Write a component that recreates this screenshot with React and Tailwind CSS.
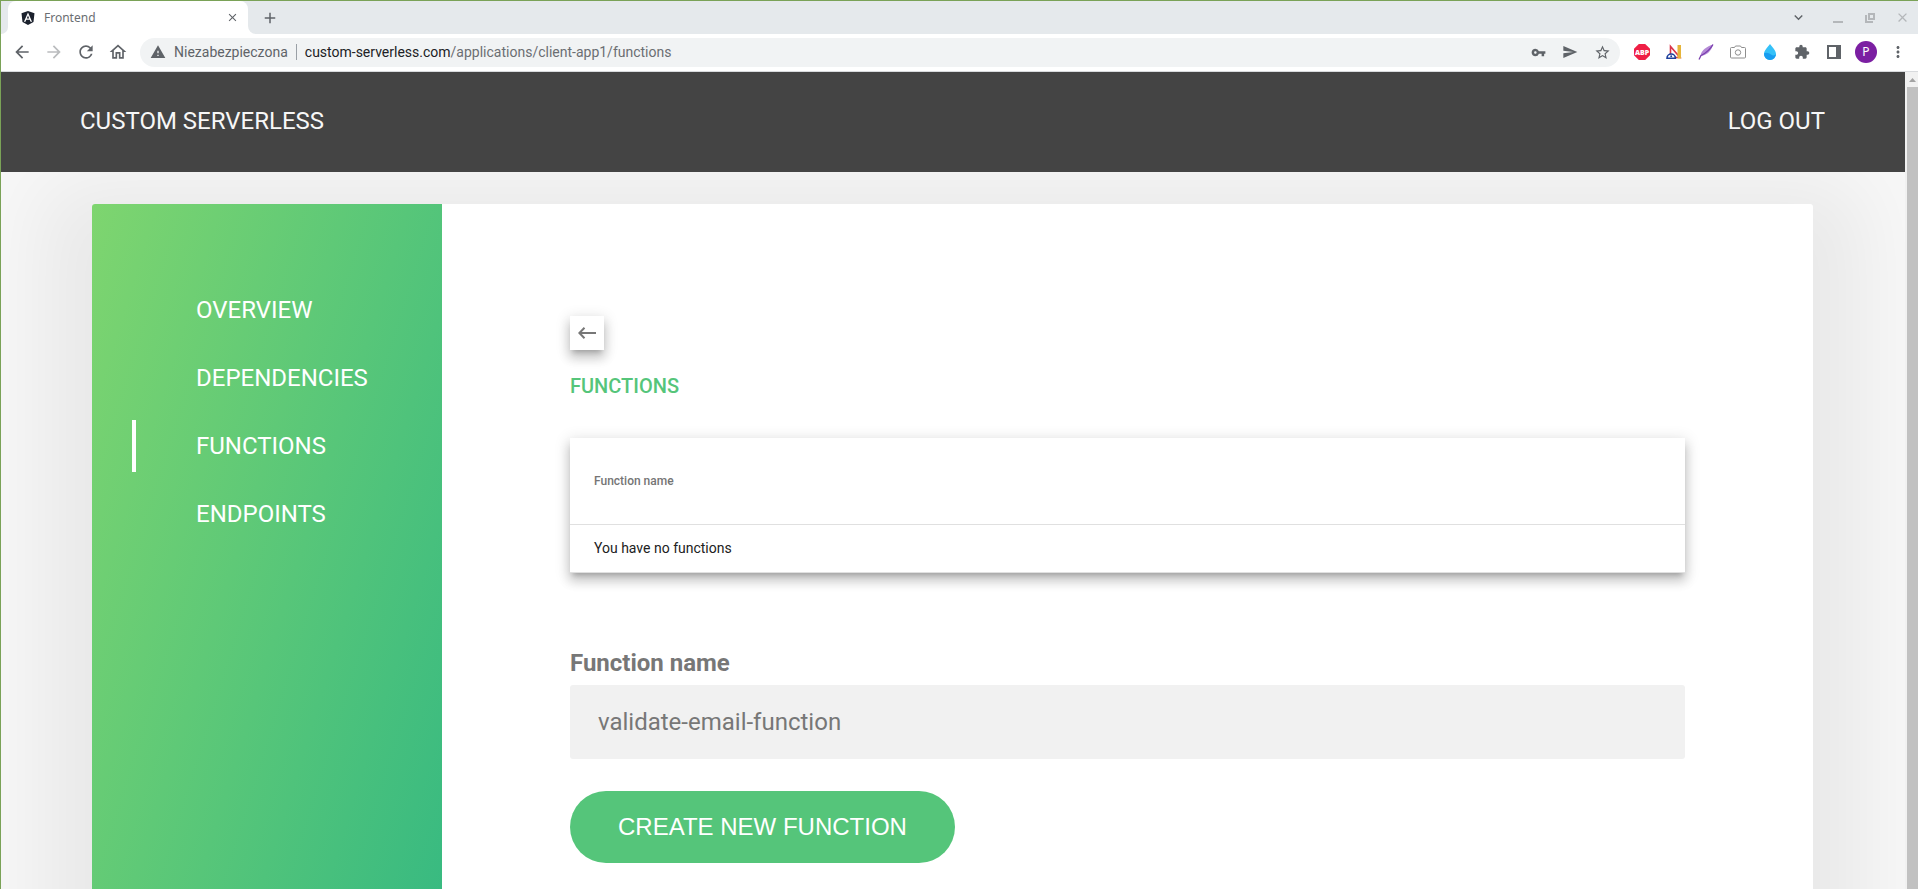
import { FaAngular } from "react-icons/fa";
import {
  MdAdd,
  MdArrowBack,
  MdArrowForward,
  MdClose,
  MdExtension,
  MdKeyboardArrowDown,
  MdMoreVert,
  MdOutlineHome,
  MdRefresh,
  MdSend,
  MdStarOutline,
  MdVpnKey,
  MdWarning,
} from "react-icons/md";

function IconButton({ label, className = "text-[#5f6368]", children }) {
  return (
    <button
      type="button"
      aria-label={label}
      className={"flex h-7 w-8 shrink-0 items-center justify-center " + className}
    >
      {children}
    </button>
  );
}

function AdBlockIcon() {
  return (
    <span className="flex size-4 items-center justify-center bg-[#ef1f45] font-['Open_Sans',sans-serif] text-[7px] leading-none font-extrabold text-white [clip-path:polygon(30%_0,70%_0,100%_30%,100%_70%,70%_100%,30%_100%,0_70%,0_30%)]">
      ABP
    </span>
  );
}

function RulerIcon() {
  return (
    <svg width="16" height="16" viewBox="0 0 16 16" fill="none" aria-hidden="true">
      <path d="M4.5 2.5v11H14z" stroke="#d9344a" strokeWidth="1.6" />
      <path d="M11.5 1H15v13.500h-3.500z" fill="#e6b53a" />
      <path d="M1 14.200a4.200 4.200 0 0 1 8.400 0z" fill="#fff" stroke="#1d3f9c" strokeWidth="1.600" />
      <circle cx="5.200" cy="12.300" r="1" fill="#1d3f9c" />
    </svg>
  );
}

function FeatherIcon() {
  return (
    <svg width="16" height="16" viewBox="0 0 16 16" aria-hidden="true">
      <path d="M15 .5C9 2.5 3 6 2.5 12 8 11.5 13 8 15 .5z" fill="#b48ad6" />
      <path d="M15 .5C12.5 5 8 9 3 11.5L1 15.5" fill="none" stroke="#7a3fae" strokeWidth="1.3" />
    </svg>
  );
}

function CameraIcon() {
  return (
    <svg width="16" height="14" viewBox="0 0 16 14" fill="none" stroke="#8e8e8e" aria-hidden="true">
      <path d="M1.5 2.5h3L5.500 1h5l1 1.500h3a1 1 0 0 1 1 1V12a1 1 0 0 1-1 1h-13a1 1 0 0 1-1-1V3.500a1 1 0 0 1 1-1z" />
      <circle cx="8" cy="7.5" r="2.700" />
    </svg>
  );
}

function DropIcon() {
  return (
    <svg width="14" height="16" viewBox="0 0 14 16" aria-hidden="true">
      <path d="M7 0c2.500 3.500 6 6.500 6 10a6 6 0 0 1-12 0C1 6.500 4.500 3.500 7 0z" fill="#35c1f8" />
      <path d="M1 9.500C3 8 6 9 8 10.500s4 1 5-.5a6 6 0 0 1-12 0z" fill="#189df0" />
    </svg>
  );
}

function SidePanelIcon() {
  return (
    <svg width="14" height="14" viewBox="0 0 14 14" aria-hidden="true">
      <path fillRule="evenodd" fill="#5f6368" d="M0 0h14v14H0zM2 2v10h7V2z" />
    </svg>
  );
}

function RestoreIcon() {
  return (
    <svg width="10" height="10" viewBox="0 0 10 10" fill="none" stroke="currentColor" strokeWidth="2" aria-hidden="true">
      <path d="M4 1h5v5H4z" />
      <path d="M1 2v7h7" />
    </svg>
  );
}

function TabStrip() {
  return (
    <div className="flex h-[33px] shrink-0 items-stretch bg-[#e5e9ec]">
      <div className="h-full w-[7px] bg-white">
        <div className="h-full w-full rounded-br-lg bg-[#e5e9ec]" />
      </div>
      <div className="flex w-[240px] items-center rounded-t-lg bg-white pr-2 pl-3">
        <FaAngular className="size-4 text-[#1b212d]" />
        <span className="ml-2 flex-1 text-xs text-[#6b6e72]">Frontend</span>
        <button type="button" aria-label="Close tab" className="flex size-4 items-center justify-center text-[#5f6368]">
          <MdClose className="size-[13px]" />
        </button>
      </div>
      <div className="h-full w-2 bg-white">
        <div className="h-full w-full rounded-bl-lg bg-[#e5e9ec]" />
      </div>
      <div className="flex flex-1 items-center">
        <button type="button" aria-label="New tab" className="flex h-7 w-7 items-center justify-center text-[#5f6368]">
          <MdAdd className="size-[18px]" />
        </button>
        <div className="ml-auto flex items-center">
          <IconButton label="Search tabs" className="mr-2 text-[#5f6368]">
            <MdKeyboardArrowDown className="size-[17px]" />
          </IconButton>
          <IconButton label="Minimize" className="text-[#b4b7ba]">
            <span className="mt-2 h-[2px] w-[10px] bg-current" />
          </IconButton>
          <IconButton label="Restore" className="text-[#b4b7ba]">
            <RestoreIcon />
          </IconButton>
          <IconButton label="Close window" className="text-[#b4b7ba]">
            <MdClose className="size-[15px]" />
          </IconButton>
        </div>
      </div>
    </div>
  );
}

function Toolbar() {
  return (
    <div className="flex h-[38px] shrink-0 items-center border-b border-[#d8dadd] bg-white pr-1 pb-px pl-[5px]">
      <IconButton label="Back"><MdArrowBack className="size-5" /></IconButton>
      <IconButton label="Forward" className="text-[#babcbe]"><MdArrowForward className="size-5" /></IconButton>
      <IconButton label="Reload"><MdRefresh className="size-5" /></IconButton>
      <IconButton label="Home"><MdOutlineHome className="size-5" /></IconButton>
      <div className="mx-[6px] flex h-[29px] flex-1 items-center rounded-full bg-[#f1f3f4] pr-[2px] pl-[10px] font-[Roboto,sans-serif] text-sm">
        <MdWarning className="size-4 text-[#5f6368]" />
        <span className="ml-2 text-[#5f6368]">Niezabezpieczona</span>
        <span className="mx-2 h-4 w-px bg-[#9aa0a6]" />
        <span className="flex-1 text-[#6b6e72]">
          <span className="text-[#202124]">custom-serverless.com</span>/applications/client-app1/functions
        </span>
        <IconButton label="Passwords"><MdVpnKey className="size-[15px]" /></IconButton>
        <IconButton label="Share"><MdSend className="size-4" /></IconButton>
        <IconButton label="Bookmark"><MdStarOutline className="size-[17px]" /></IconButton>
      </div>
      <IconButton label="Ad blocker"><AdBlockIcon /></IconButton>
      <IconButton label="Page ruler"><RulerIcon /></IconButton>
      <IconButton label="Feather"><FeatherIcon /></IconButton>
      <IconButton label="Screenshot"><CameraIcon /></IconButton>
      <IconButton label="Colour picker"><DropIcon /></IconButton>
      <IconButton label="Extensions"><MdExtension className="size-4" /></IconButton>
      <IconButton label="Side panel"><SidePanelIcon /></IconButton>
      <IconButton label="Profile">
        <span className="flex size-[22px] shrink-0 items-center justify-center rounded-full bg-[#7b1fa2] text-xs text-white">P</span>
      </IconButton>
      <IconButton label="Menu"><MdMoreVert className="size-[18px]" /></IconButton>
    </div>
  );
}

const NAV_ITEMS = ["OVERVIEW", "DEPENDENCIES", "FUNCTIONS", "ENDPOINTS"];

function Sidebar({ active }) {
  return (
    <nav className="w-[350px] shrink-0 rounded-l-[3px] bg-[linear-gradient(to_right_bottom,#7ed56f,#28b485)] pt-20 pl-10">
      <ul className="flex flex-col gap-4">
        {NAV_ITEMS.map((item) => (
          <li key={item}>
            <a
              href="#"
              className={
                "flex h-[52px] items-center border-l-4 pl-[60px] text-2xl text-white " +
                (item === active ? "border-white" : "border-transparent")
              }
            >
              {item}
            </a>
          </li>
        ))}
      </ul>
    </nav>
  );
}

function FunctionsPanel() {
  return (
    <main className="flex-1 px-32 pt-28 pb-32">
      <button
        type="button"
        aria-label="Go back"
        className="flex size-[34px] items-center justify-center bg-white text-[#777] shadow-[0_5px_5px_-3px_rgba(0,0,0,0.2),0_8px_10px_1px_rgba(0,0,0,0.14),0_3px_14px_2px_rgba(0,0,0,0.12)]"
      >
        <svg width="18" height="12" viewBox="0 0 18 12" fill="none" stroke="currentColor" strokeWidth="2" aria-hidden="true">
          <path d="M18 6H1.500M6.500 .8L1.400 6l5.100 5.200" />
        </svg>
      </button>
      <h3 className="mt-5 text-xl leading-8 font-medium text-[#55c57a]">FUNCTIONS</h3>
      <table className="mt-9 w-full border-collapse bg-white text-left shadow-[0_5px_5px_-3px_rgba(0,0,0,0.2),0_8px_10px_1px_rgba(0,0,0,0.14),0_3px_14px_2px_rgba(0,0,0,0.12)]">
        <thead>
          <tr className="h-[86px] border-b border-[#e0e0e0]">
            <th className="px-6 text-xs font-medium text-[#757575]">Function name</th>
          </tr>
        </thead>
        <tbody>
          <tr className="h-12 border-b border-[#e0e0e0]">
            <td className="px-6 text-sm text-[#212121]">You have no functions</td>
          </tr>
        </tbody>
      </table>
      <form className="mt-[72px] flex flex-col items-start" onSubmit={(event) => event.preventDefault()}>
        <label htmlFor="function-name" className="text-2xl leading-9 font-bold text-[#777]">
          Function name
        </label>
        <input
          id="function-name"
          type="text"
          placeholder="validate-email-function"
          className="mt-1 h-[74px] w-full rounded-[3px] bg-[#f1f1f1] px-7 text-2xl text-[#777] placeholder:text-[#777]"
        />
        <button
          type="submit"
          className="mt-8 h-[72px] rounded-full bg-[#55c57a] px-12 font-['Liberation_Sans',Arial,sans-serif] text-2xl text-white"
        >
          CREATE NEW FUNCTION
        </button>
      </form>
    </main>
  );
}

function PageScrollbar() {
  return (
    <div className="flex w-[13px] shrink-0 flex-col bg-[#f1f1f1]" aria-hidden="true">
      <div className="flex h-[15px] shrink-0 items-center justify-center pl-[2px]">
        <svg width="7" height="4" viewBox="0 0 7 4"><path d="M0 4L3.500 0 7 4z" fill="#a3a3a3" /></svg>
      </div>
      <div className="ml-[2px] flex-1 bg-[#c1c1c1]" />
    </div>
  );
}

export default function App() {
  return (
    <div className="flex h-screen flex-col overflow-hidden border-t border-l border-[#7aa257] bg-[#f7f7f7] font-['Noto_Sans','Open_Sans',sans-serif]">
      <TabStrip />
      <Toolbar />
      <div className="flex min-h-0 flex-1">
        <div className="min-w-0 flex-1 overflow-hidden font-[Roboto,sans-serif]">
          <header className="relative flex h-[100px] items-center justify-between bg-[#444] pr-20 pb-[2px] pl-[79px] text-2xl text-[#f7f7f7]">
            <a href="#">CUSTOM SERVERLESS</a>
            <a href="#">LOG OUT</a>
          </header>
          <div className="mr-[92px] ml-[91px] mt-8 flex min-h-[1120px] rounded-[3px] bg-white shadow-[0_30px_80px_50px_rgba(0,0,0,0.06)]">
            <Sidebar active="FUNCTIONS" />
            <FunctionsPanel />
          </div>
        </div>
        <PageScrollbar />
      </div>
    </div>
  );
}
